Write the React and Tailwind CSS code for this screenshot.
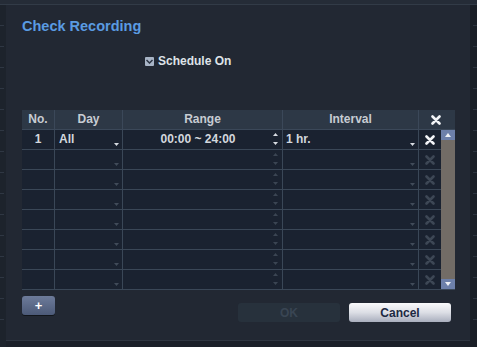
import React from "react"

const font = { fontFamily: '"Liberation Sans", Arial, sans-serif' }

function XIcon({ on }) {
  return (
    <svg width="10" height="10" viewBox="0 0 10 10">
      <path d="M1.5 1.5 L8.5 8.5 M8.5 1.5 L1.5 8.5" stroke={on ? "#f2f4f7" : "#3d4755"} strokeWidth="2.6" strokeLinecap="round" />
    </svg>
  )
}

function Caret({ on }) {
  return (
    <svg width="5" height="3" viewBox="0 0 5 3" className="absolute right-[3px] bottom-[3px]">
      <path d="M0 0 L5 0 L2.5 3 Z" fill={on ? "#d8dce2" : "#414b59"} />
    </svg>
  )
}

function Spinner({ on }) {
  const c = on ? "#d8dce2" : "#3b4553"
  return (
    <svg width="5" height="14" viewBox="0 0 5 14" className="absolute right-[4px] top-[2px]">
      <path d="M0 4 L2.5 1 L5 4 Z" fill={c} />
      <path d="M0 10 L2.5 13 L5 10 Z" fill={c} />
    </svg>
  )
}

const rows = [
  { no: "1", day: "All", range: "00:00 ~ 24:00", interval: "1 hr." },
  {}, {}, {}, {}, {}, {}, {},
]

export default function App() {
  return (
    <div className="w-[477px] h-[347px] bg-[#1b2029] overflow-hidden flex flex-col" style={font}>
      {/* top strip */}
      <div className="h-[5px] bg-[#252c37] border-b border-[#323b47] shrink-0" />

      <div className="flex flex-1">
        {/* left strip */}
        <div className="w-[6px] bg-[#1d232c] flex flex-col gap-[20px] pt-[20px]">
          {Array.from({ length: 15 }).map((_, i) => (
            <div key={i} className="h-px w-[4px] bg-[#2f3743]" />
          ))}
        </div>

        {/* panel */}
        <div className="w-[464px] h-[336px] bg-[#222833] border-b border-[#2f3641] pl-[16px] flex flex-col">
          <div className="mt-[11px] h-[20px] text-[14.5px] font-bold text-[#5a9be2] leading-[20px]">Check Recording</div>

          <div className="mt-[16px] h-[18px] ml-[123px] flex items-center gap-[4px]">
            <div className="w-[9px] h-[9px] bg-[#a8b4c6] rounded-[1px] flex items-center justify-center">
              <svg width="7" height="5" viewBox="0 0 7 5"><path d="M0.5 1 L3.5 4 L6.5 1" stroke="#2a3342" strokeWidth="1.5" fill="none" /></svg>
            </div>
            <span className="text-[12px] font-bold text-[#dfe3e8]">Schedule On</span>
          </div>

          {/* table */}
          <div className="mt-[40px] w-[433px]">
            <div className="grid grid-cols-[33px_68px_160px_136px_36px] h-[20px] bg-[#2d3846] border-b border-[#3b4859] text-[12px] font-bold text-[#c7ccd3] leading-[19px]">
              <div className="text-center border-r border-[#3b4859]">No.</div>
              <div className="text-center border-r border-[#3b4859]">Day</div>
              <div className="text-center border-r border-[#3b4859]">Range</div>
              <div className="text-center border-r border-[#3b4859]">Interval</div>
              <div className="flex items-center pl-[12px]"><XIcon on /></div>
            </div>
            <div className="flex">
              <div className="flex flex-col">
                {rows.map((r, i) => {
                  const on = i === 0
                  return (
                    <div key={i} className="grid grid-cols-[33px_68px_160px_136px_22px] h-[20px] bg-[#1a2230] border-b border-[#3a4757] text-[12px] font-bold text-[#d3d7dd] leading-[19px]">
                      <div className="text-center border-r border-[#3a4757]">{r.no}</div>
                      <div className="relative pl-[4px] border-r border-[#3a4757]">{r.day}<Caret on={on} /></div>
                      <div className="relative text-center pr-[9px] border-r border-[#3a4757]">{r.range}<Spinner on={on} /></div>
                      <div className="relative pl-[3px] border-r border-[#3a4757]">{r.interval}<Caret on={on} /></div>
                      <div className="flex items-center justify-center"><XIcon on={on} /></div>
                    </div>
                  )
                })}
              </div>
              <div className="w-[14px] h-[160px] bg-[#726c66] flex flex-col justify-between border-b border-[#3a4757]">
                <div className="h-[10px] bg-[#6d80aa] flex items-center justify-center">
                  <svg width="6" height="4" viewBox="0 0 6 4"><path d="M0 4 L3 0 L6 4 Z" fill="#eef1f6" /></svg>
                </div>
                <div className="h-[10px] bg-[#6d80aa] flex items-center justify-center">
                  <svg width="6" height="4" viewBox="0 0 6 4"><path d="M0 0 L3 4 L6 0 Z" fill="#eef1f6" /></svg>
                </div>
              </div>
            </div>
          </div>

          {/* bottom buttons */}
          <div className="flex items-start w-[429px] mt-[6px]">
            <button className="w-[33px] h-[19px] rounded-[3px] bg-gradient-to-b from-[#6d7b9a] to-[#4c5a78] text-white text-[13px] font-bold leading-[18px] shadow-[0_1px_0_#11151b]">+</button>
            <div className="flex gap-[9px] ml-auto mt-[7px]">
              <button className="w-[102px] h-[19px] rounded-[3px] bg-[#27313c] text-[12px] font-bold text-[#394553]">OK</button>
              <button className="w-[102px] h-[19px] rounded-[3px] bg-gradient-to-b from-[#fafafc] via-[#dcdee5] to-[#a9aebd] text-[12px] font-bold text-[#1d2942]">Cancel</button>
            </div>
          </div>
        </div>

        {/* right strip */}
        <div className="w-[7px] bg-[#191e26] flex flex-col gap-[20px] pt-[20px] items-end">
          {Array.from({ length: 15 }).map((_, i) => (
            <div key={i} className="h-px w-[4px] bg-[#2c333e]" />
          ))}
        </div>
      </div>
    </div>
  )
}
